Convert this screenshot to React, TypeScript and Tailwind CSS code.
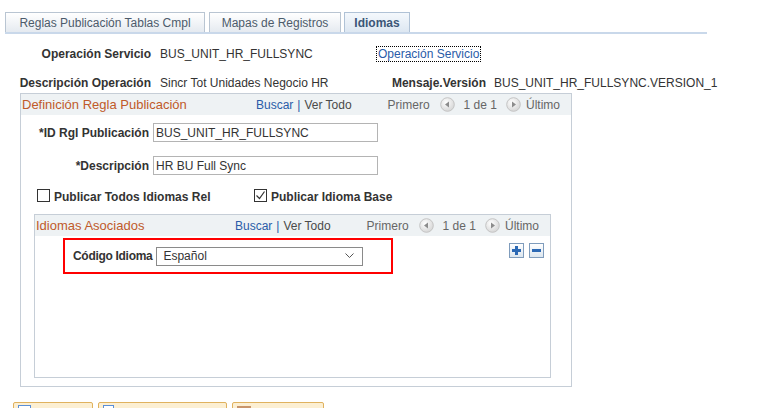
import React from 'react';

const NavCircle = ({ dir }: { dir: 'left' | 'right' }) => (
  <svg width="15" height="15" viewBox="0 0 15 15" className="shrink-0">
    <defs>
      <radialGradient id={`g-${dir}`} cx="40%" cy="35%" r="70%">
        <stop offset="0%" stopColor="#ffffff" />
        <stop offset="100%" stopColor="#d4d4d4" />
      </radialGradient>
    </defs>
    <circle cx="7.5" cy="7.5" r="6.8" fill={`url(#g-${dir})`} stroke="#c4c4c4" strokeWidth="1" />
    {dir === 'left' ? (
      <polygon points="5,7.5 9,4.5 9,10.5" fill="#8c8c8c" />
    ) : (
      <polygon points="10,7.5 6,4.5 6,10.5" fill="#8c8c8c" />
    )}
  </svg>
);

const GridHeader = ({ title }: { title: string }) => (
  <div className="flex h-[21px] items-center bg-[#eef2f4]">
    <span className="pl-[1px] text-[13px] text-[#c05a2a]">{title}</span>
    <div className="ml-auto flex items-center pr-[11px]">
      <span className="text-[#2a5ca8]">Buscar</span>
      <span className="px-[4px] text-[#2a5ca8]">|</span>
      <span className="text-[#4a4a4a]">Ver Todo</span>
      <span className="ml-[36px] text-[#666]">Primero</span>
      <span className="ml-[10px] flex"><NavCircle dir="left" /></span>
      <span className="ml-[9px] text-[#666]">1 de 1</span>
      <span className="ml-[9px] flex"><NavCircle dir="right" /></span>
      <span className="ml-[5px] text-[#666]">Último</span>
    </div>
  </div>
);

const Checkbox = ({ checked }: { checked?: boolean }) => (
  <span className="flex h-[13px] w-[13px] shrink-0 items-center justify-center border border-[#333] bg-white">
    {checked && (
      <svg width="11" height="11" viewBox="0 0 11 11">
        <polyline points="1.5,5.5 4.5,8.5 9.5,1.5" fill="none" stroke="#333" strokeWidth="1.2" />
      </svg>
    )}
  </span>
);

const SmallButton = ({ kind }: { kind: 'plus' | 'minus' }) => (
  <span className="flex h-[15px] w-[15px] items-center justify-center border border-[#7f9cbc] bg-gradient-to-b from-white to-[#dce6ef]">
    <svg width="11" height="11" viewBox="0 0 11 11">
      <rect x="1" y="4" width="9" height="3" fill="#2c69b4" />
      {kind === 'plus' && <rect x="4" y="1" width="3" height="9" fill="#2c69b4" />}
    </svg>
  </span>
);

export default function App() {
  return (
    <div className="relative h-[408px] w-[764px] overflow-hidden bg-white font-['Liberation_Sans',Arial,sans-serif] text-[12px] leading-[14px] text-[#333]">
      {/* tabs */}
      <div className="pl-[5px] pt-[12px]">
        <div className="flex w-[702px] items-end border-b-2 border-[#c9d8ea]">
          <div className="flex h-[20px] w-[200px] items-center justify-center border border-b-0 border-[#b9c5d2] bg-gradient-to-b from-white to-[#e5eaf0] text-[#4d5b6b]">
            Reglas Publicación Tablas Cmpl
          </div>
          <div className="ml-[4px] flex h-[20px] w-[132px] items-center justify-center border border-b-0 border-[#b9c5d2] bg-gradient-to-b from-white to-[#e5eaf0] text-[#4d5b6b]">
            Mapas de Registros
          </div>
          <div className="ml-[3px] flex h-[20px] w-[66px] items-center justify-center border border-b-0 border-[#b0c2d6] bg-gradient-to-b from-[#f4f8fc] to-[#dde7f2] font-bold text-[#3b5677]">
            Idiomas
          </div>
        </div>
      </div>

      {/* header fields */}
      <div className="mt-[12px] flex h-[16px] items-center">
        <span className="w-[151px] text-right font-bold">Operación Servicio</span>
        <span className="ml-[9px] w-[216px]">BUS_UNIT_HR_FULLSYNC</span>
        <span className="flex h-[16px] items-center border border-dotted border-black px-[1px] text-[#2a5ca8]">Operación Servicio</span>
      </div>
      <div className="mt-[13px] flex h-[15px] items-center">
        <span className="w-[151px] text-right font-bold">Descripción Operación</span>
        <span className="ml-[9px] w-[216px]">Sincr Tot Unidades Negocio HR</span>
        <span className="w-[110px] text-right font-bold">Mensaje.Versión</span>
        <span className="ml-[8px]">BUS_UNIT_HR_FULLSYNC.VERSION_1</span>
      </div>

      {/* outer group */}
      <div className="ml-[20px] mt-[3px] flex h-[294px] w-[552px] flex-col border border-[#c6ced7]">
        <GridHeader title="Definición Regla Publicación" />

        <div className="mt-[8px] flex h-[19px] items-center">
          <span className="w-[128px] text-right font-bold">*ID Rgl Publicación</span>
          <span className="ml-[4px] flex h-[19px] w-[225px] items-center border border-[#b4b4b4] px-[2px]">BUS_UNIT_HR_FULLSYNC</span>
        </div>
        <div className="mt-[14px] flex h-[19px] items-center">
          <span className="w-[128px] text-right font-bold">*Descripción</span>
          <span className="ml-[4px] flex h-[19px] w-[225px] items-center border border-[#b4b4b4] px-[2px]">HR BU Full Sync</span>
        </div>

        <div className="mt-[13px] flex h-[15px] items-center pl-[16px]">
          <div className="flex w-[217px] items-center">
            <Checkbox />
            <span className="ml-[4px] mt-[3px] font-bold">Publicar Todos Idiomas Rel</span>
          </div>
          <div className="flex items-center">
            <Checkbox checked />
            <span className="ml-[4px] mt-[3px] font-bold">Publicar Idioma Base</span>
          </div>
        </div>

        {/* inner group */}
        <div className="ml-[13px] mt-[11px] flex h-[164px] w-[517px] flex-col border border-[#c6ced7]">
          <GridHeader title="Idiomas Asociados" />
          <div className="flex items-start">
            <div className="ml-[28px] mt-[2px] flex h-[36px] w-[330px] items-center border-2 border-[#ff0000] pl-[8px]">
              <span className="font-bold tracking-[-0.3px]">Código Idioma</span>
              <div className="ml-[4px] flex h-[19px] w-[207px] items-center justify-between border border-[#8a8a8a] pl-[6px] pr-[8px]">
                <span>Español</span>
                <svg width="9" height="6" viewBox="0 0 9 6">
                  <polyline points="0.5,0.5 4.5,4.5 8.5,0.5" fill="none" stroke="#555" strokeWidth="1" />
                </svg>
              </div>
            </div>
            <div className="ml-auto mr-[6px] mt-[7px] flex gap-[5px]">
              <SmallButton kind="plus" />
              <SmallButton kind="minus" />
            </div>
          </div>
        </div>
      </div>

      {/* bottom buttons */}
      <div className="ml-[13px] mt-[15px] flex gap-[5px]">
        <div className="flex h-[20px] w-[80px] rounded-t-[2px] border border-[#e0b25e] bg-[#fcefd2] pl-[4px] pt-[2px]">
          <span className="h-[10px] w-[13px] border border-[#5b8fd6] bg-white" />
        </div>
        <div className="flex h-[20px] w-[129px] rounded-t-[2px] border border-[#e0b25e] bg-[#fcefd2] pl-[4px] pt-[2px]">
          <span className="h-[10px] w-[11px] border border-[#5b8fd6] bg-white" />
        </div>
        <div className="flex h-[20px] w-[92px] rounded-t-[2px] border border-[#e0b25e] bg-[#fcefd2] pl-[4px] pt-[3px]">
          <span className="h-[10px] w-[14px] bg-[#c9956a]" />
        </div>
      </div>
    </div>
  );
}
